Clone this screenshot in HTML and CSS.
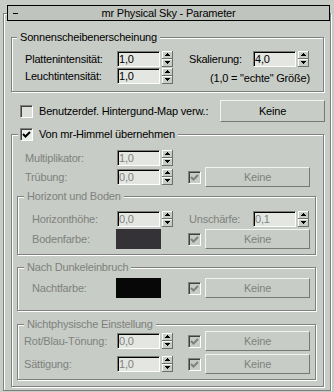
FILE: index.html
```html
<!DOCTYPE html>
<html lang="de">
<head>
  <meta charset="UTF-8">
  <title>mr Physical Sky - Parameter</title>
  <link rel="stylesheet" href="styles.css">
</head>
<body>
  <!-- gemeinsame Symbole -->
  <svg class="defs" xmlns="http://www.w3.org/2000/svg">
    <symbol id="spin" viewBox="0 0 11 16">
      <rect x="0" y="0" width="11" height="16" fill="#c8ccc6"/>
      <rect x="0" y="0" width="11" height="1" fill="#fff"/>
      <rect x="0" y="0" width="1" height="8" fill="#fff"/>
      <rect x="0" y="7" width="11" height="1" fill="#6e706c"/>
      <rect x="10" y="0" width="1" height="8" fill="#6e706c"/>
      <rect x="0" y="8" width="11" height="1" fill="#fff"/>
      <rect x="0" y="8" width="1" height="8" fill="#fff"/>
      <rect x="0" y="15" width="11" height="1" fill="#6e706c"/>
      <rect x="10" y="8" width="1" height="8" fill="#6e706c"/>
      <rect x="5" y="2" width="1" height="1" fill="#000"/>
      <rect x="4" y="3" width="3" height="1" fill="#000"/>
      <rect x="3" y="4" width="5" height="1" fill="#000"/>
      <rect x="3" y="10" width="5" height="1" fill="#000"/>
      <rect x="4" y="11" width="3" height="1" fill="#000"/>
      <rect x="5" y="12" width="1" height="1" fill="#000"/>
    </symbol>
    <symbol id="tick" viewBox="0 0 11 11">
      <polyline points="2,5 4.5,7.5 9,3" fill="none" stroke="currentColor" stroke-width="2"/>
    </symbol>
  </svg>

  <div class="rollout">
    <div class="titlebar">
      <span class="minus"></span>
      <span class="title-text">mr Physical Sky - Parameter</span>
    </div>

    <!-- Sonnenscheibe -->
    <div class="group g-sun">
      <div class="group-title">Sonnenscheibenerscheinung</div>
      <div class="row r1">
        <div class="left">
          <span class="lab">Plattenintensität:</span>
          <span class="field">1,0</span>
          <svg class="spin"><use href="#spin"/></svg>
        </div>
        <div class="right">
          <span class="rlab">Skalierung:</span>
          <span class="field">4,0</span>
          <svg class="spin"><use href="#spin"/></svg>
        </div>
      </div>
      <div class="row r2">
        <div class="left">
          <span class="lab">Leuchtintensität:</span>
          <span class="field">1,0</span>
          <svg class="spin"><use href="#spin"/></svg>
        </div>
        <div class="right note">(1,0 = "echte" Größe)</div>
      </div>
    </div>

    <div class="map-row">
      <span class="check"></span>
      <span class="map-text">Benutzerdef. Hintergund-Map verw.:</span>
      <span class="btn">Keine</span>
    </div>

    <!-- Von mr-Himmel -->
    <div class="group g-sky">
      <div class="group-title">
        <span class="check on"><svg class="tick"><use href="#tick"/></svg></span>
        Von mr-Himmel übernehmen
      </div>

      <div class="row dis m1">
        <div class="left">
          <span class="lab">Multiplikator:</span>
          <span class="field">1,0</span>
          <svg class="spin"><use href="#spin"/></svg>
        </div>
      </div>
      <div class="row tall dis m2">
        <div class="left">
          <span class="lab">Trübung:</span>
          <span class="field">0,0</span>
          <svg class="spin"><use href="#spin"/></svg>
        </div>
        <div class="right">
          <span class="check dis"><svg class="tick"><use href="#tick"/></svg></span>
          <span class="btn">Keine</span>
        </div>
      </div>

      <div class="group sub s-hor dis">
        <div class="group-title">Horizont und Boden</div>
        <div class="row h1">
          <div class="left">
            <span class="lab">Horizonthöhe:</span>
            <span class="field">0,0</span>
            <svg class="spin"><use href="#spin"/></svg>
          </div>
          <div class="right">
            <span class="rlab">Unschärfe:</span>
            <span class="field">0,1</span>
            <svg class="spin"><use href="#spin"/></svg>
          </div>
        </div>
        <div class="row tall h2">
          <div class="left">
            <span class="lab">Bodenfarbe:</span>
            <span class="swatch ground"></span>
          </div>
          <div class="right">
            <span class="check dis"><svg class="tick"><use href="#tick"/></svg></span>
            <span class="btn">Keine</span>
          </div>
        </div>
      </div>

      <div class="group sub s-night dis">
        <div class="group-title">Nach Dunkeleinbruch</div>
        <div class="row tall n1">
          <div class="left">
            <span class="lab">Nachtfarbe:</span>
            <span class="swatch night"></span>
          </div>
          <div class="right">
            <span class="check dis"><svg class="tick"><use href="#tick"/></svg></span>
            <span class="btn">Keine</span>
          </div>
        </div>
      </div>

      <div class="group sub s-np dis">
        <div class="group-title">Nichtphysische Einstellung</div>
        <div class="row tall p1">
          <div class="left">
            <span class="lab">Rot/Blau-Tönung:</span>
            <span class="field">0,0</span>
            <svg class="spin"><use href="#spin"/></svg>
          </div>
          <div class="right">
            <span class="check dis"><svg class="tick"><use href="#tick"/></svg></span>
            <span class="btn">Keine</span>
          </div>
        </div>
        <div class="row tall p2">
          <div class="left">
            <span class="lab">Sättigung:</span>
            <span class="field">1,0</span>
            <svg class="spin"><use href="#spin"/></svg>
          </div>
          <div class="right">
            <span class="check dis"><svg class="tick"><use href="#tick"/></svg></span>
            <span class="btn">Keine</span>
          </div>
        </div>
      </div>
    </div>
  </div>
</body>
</html>
```

FILE: styles.css
```css
html {
  background: #c8ccc6;
}
body {
  margin: 0;
  font-family: "Liberation Sans", Arial, sans-serif;
  font-size: 11px;
  letter-spacing: -0.2px;
  color: #000;
}
.defs {
  position: absolute;
  width: 0;
  height: 0;
}

/* Rollout-Rahmen */
.rollout {
  margin: 13px 3px 0 3px;
  border: 1px solid #808080;
  box-shadow: 1px 1px 0 #fff, inset 1px 1px 0 #fff;
}
.titlebar {
  margin: -9px 0 0 3px;
  height: 16px;
  box-sizing: border-box;
  border: 1px solid #000;
  background: #c0c4be;
  display: grid;
  grid-template-columns: 20px 1fr 20px;
  align-items: center;
  line-height: 14px;
}
.minus {
  width: 5px;
  height: 1px;
  background: #000;
  margin-left: 5px;
}
.title-text {
  text-align: center;
  white-space: nowrap;
}

/* Gruppen */
.group {
  margin: 16px 6px 0 7px;
  border: 1px solid #808080;
  box-shadow: 1px 1px 0 #fff, inset 1px 1px 0 #fff;
  padding-bottom: 7px;
}
.group-title {
  margin: -7px 0 0 5px;
  padding: 0 3px;
  width: max-content;
  background: #c8ccc6;
  line-height: 13px;
}
.g-sky {
  margin-top: 12px;
  margin-bottom: 3px;
  padding-bottom: 6px;
}
.g-sky > .group-title {
  margin: -8px 0 0 6px;
  padding: 0 3px 0 2px;
  display: flex;
  align-items: center;
  gap: 6px;
  line-height: 14px;
}
.sub {
  margin: 9px 7px 0 5px;
}
.sub .group-title {
  margin-left: 6px;
}
.s-hor { padding-bottom: 5px; }
.s-night { margin-top: 12px; padding-bottom: 12px; }
.s-np { margin-top: 13px; padding-bottom: 5px; }

/* Zeilen */
.row {
  display: flex;
  align-items: center;
  height: 16px;
}
.row.tall {
  height: 20px;
}
.r1 { margin-top: 7px; }
.r2 { margin-top: 1px; }
.m1 { margin-top: 9px; }
.m2 { margin-top: 1px; }
.h1 { margin-top: 8px; }
.h2 { margin-top: 2px; }
.n1 { margin-top: 4px; }
.p1 { margin-top: 0; }
.p2 { margin-top: 3px; }

.left {
  display: flex;
  align-items: center;
  width: 176px;
  flex: none;
}
.sub .left {
  width: 170px;
}
.lab {
  width: 105px;
  padding-left: 13px;
  box-sizing: border-box;
  flex: none;
  white-space: nowrap;
  line-height: 13px;
}
.sub .lab {
  width: 99px;
  padding-left: 14px;
}
.s-np .lab {
  padding-left: 6px;
}
.right {
  display: flex;
  align-items: center;
}
.rlab {
  width: 65px;
  padding-left: 1px;
  box-sizing: border-box;
  white-space: nowrap;
}
.note {
  align-self: flex-start;
  margin-top: 4px;
  padding-left: 22px;
  line-height: 13px;
  white-space: nowrap;
}
.dis {
  color: #7e827e;
}

/* Steuerelemente */
.field {
  width: 43px;
  height: 16px;
  box-sizing: border-box;
  border: 1px solid;
  border-color: #7c7e7a #fff #fff #7c7e7a;
  box-shadow: inset 1px 1px 0 #000;
  background: #e4e6e2;
  padding-left: 1px;
  line-height: 14px;
  flex: none;
}
.spin {
  display: block;
  width: 11px;
  height: 16px;
  margin-left: 2px;
  flex: none;
}
.check {
  width: 13px;
  height: 13px;
  box-sizing: border-box;
  border: 1px solid;
  border-color: #808080 #fff #fff #808080;
  box-shadow: inset 1px 1px 0 #404040;
  background: #dcdfda;
  color: #000;
  flex: none;
}
.check.on {
  background: #eceee9;
}
.check.dis {
  background: #c8ccc6;
  color: #7e827e;
}
.tick {
  display: block;
  width: 11px;
  height: 11px;
}
.btn {
  width: 105px;
  height: 20px;
  box-sizing: border-box;
  border: 1px solid;
  border-color: #f2f4f0 #767874 #767874 #f2f4f0;
  display: flex;
  align-items: center;
  justify-content: center;
  flex: none;
}
.right .check + .btn {
  margin-left: 4px;
}
.swatch {
  width: 45px;
  height: 20px;
  margin-left: -1px;
  flex: none;
}
.ground { background: #343236; }
.night { background: #070707; }

.map-row {
  display: flex;
  align-items: center;
  height: 22px;
  margin: 8px 5px 0 0;
  padding-left: 16px;
}
.map-text {
  margin-left: 6px;
  white-space: nowrap;
}
.map-row .btn {
  margin-left: auto;
  height: 22px;
}
```
